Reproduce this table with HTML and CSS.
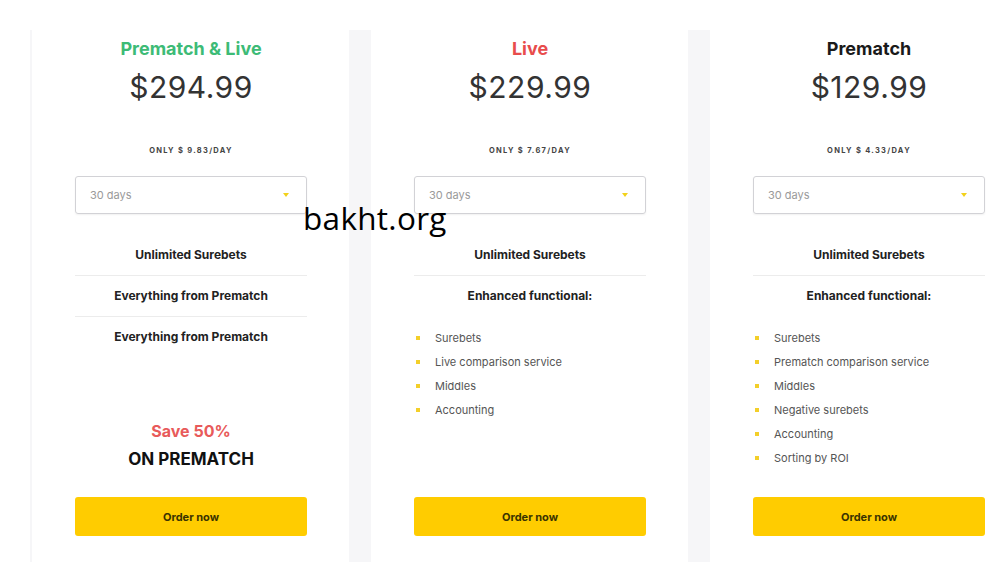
FILE: index.html
```html
<!DOCTYPE html>
<html lang="en">
<head>
<meta charset="utf-8">
<title>Pricing</title>
<link rel="stylesheet" href="styles.css">
</head>
<body>
<div class="page">
  <div class="plans">
    <section class="card">
      <h2 class="title title-green">Prematch &amp; Live</h2>
      <div class="price">$294.99</div>
      <div class="per-day">ONLY $ 9.83/DAY</div>
      <div class="select"><span>30 days</span><i class="caret"></i></div>
      <ul class="features">
        <li>Unlimited Surebets</li>
        <li>Everything from Prematch</li>
        <li>Everything from Prematch</li>
      </ul>
      <div class="foot">
        <div class="promo">
          <div class="promo-save">Save 50%</div>
          <div class="promo-on">ON PREMATCH</div>
        </div>
        <button class="order">Order now</button>
      </div>
    </section>
    <section class="card">
      <h2 class="title title-red">Live</h2>
      <div class="price">$229.99</div>
      <div class="per-day">ONLY $ 7.67/DAY</div>
      <div class="select"><span>30 days</span><i class="caret"></i></div>
      <ul class="features">
        <li>Unlimited Surebets</li>
        <li>Enhanced functional:</li>
      </ul>
      <ul class="bullets">
        <li>Surebets</li>
        <li>Live comparison service</li>
        <li>Middles</li>
        <li>Accounting</li>
      </ul>
      <div class="foot">
        <button class="order">Order now</button>
      </div>
    </section>
    <section class="card">
      <h2 class="title">Prematch</h2>
      <div class="price">$129.99</div>
      <div class="per-day">ONLY $ 4.33/DAY</div>
      <div class="select"><span>30 days</span><i class="caret"></i></div>
      <ul class="features">
        <li>Unlimited Surebets</li>
        <li>Enhanced functional:</li>
      </ul>
      <ul class="bullets">
        <li>Surebets</li>
        <li>Prematch comparison service</li>
        <li>Middles</li>
        <li>Negative surebets</li>
        <li>Accounting</li>
        <li>Sorting by ROI</li>
      </ul>
      <div class="foot">
        <button class="order">Order now</button>
      </div>
    </section>
  </div>
  <div class="watermark">bakht.org</div>
</div>
</body>
</html>
```

FILE: styles.css
```css
* { box-sizing: border-box; }
html, body { margin: 0; padding: 0; background: #fff; }
body {
  width: 1002px;
  height: 562px;
  overflow: hidden;
  font-family: Inter, "Liberation Sans", Arial, sans-serif;
  color: #222;
}
.page { position: relative; height: 562px; overflow: hidden; }
.plans {
  margin: 30px 0 0 30px;
  padding-left: 2px;
  display: flex;
  gap: 22px;
  background: #f6f6f8;
  width: 1020px;
}
.card {
  flex: 0 0 317px;
  height: 532px;
  background: #fff;
  padding: 7px 42px 26px 43px;
  display: flex;
  flex-direction: column;
  align-items: stretch;
  text-align: center;
}
.title {
  margin: 0;
  font-size: 18px;
  line-height: 24px;
  font-weight: 700;
  color: #1a1a1a;
}
.title-green { color: #3dbb76; }
.title-red { color: #e84c4c; }
.price {
  margin-top: 8px;
  font-size: 30px;
  line-height: 36px;
  font-weight: 400;
  color: #333;
  letter-spacing: 0.5px;
}
.per-day {
  margin-top: 40px;
  font-size: 7.5px;
  line-height: 12px;
  font-weight: 700;
  letter-spacing: 1.3px;
  color: #444;
}
.select {
  margin-top: 19px;
  height: 38px;
  border: 1px solid #d2d2d6;
  border-radius: 3px;
  box-shadow: 0 1px 2px rgba(0,0,0,0.06);
  display: flex;
  align-items: center;
  justify-content: space-between;
  padding: 0 17px 0 14px;
  font-size: 11px;
  color: #9a9a9a;
}
.caret {
  width: 0;
  height: 0;
  border-left: 3.5px solid transparent;
  border-right: 3.5px solid transparent;
  border-top: 4px solid #f2d11a;
}
.features {
  list-style: none;
  margin: 21px 0 0;
  padding: 0;
}
.features li {
  padding: 13px 0 13px;
  font-size: 12px;
  line-height: 14px;
  font-weight: 700;
  color: #222;
}
.features li + li { border-top: 1px solid #ececec; }
.bullets {
  list-style: none;
  margin: 10px 0 0;
  padding: 0;
  text-align: left;
}
.bullets li {
  position: relative;
  padding-left: 21px;
  font-size: 11px;
  line-height: 24px;
  color: #555;
}
.bullets li::before {
  content: "";
  position: absolute;
  left: 2px;
  top: 10px;
  width: 4px;
  height: 4px;
  background: #f3cf2a;
}
.foot {
  margin-top: auto;
  display: flex;
  flex-direction: column;
}
.promo-save {
  font-size: 16px;
  line-height: 20px;
  font-weight: 700;
  color: #e85a5a;
}
.promo-on {
  margin-top: 8px;
  font-size: 17px;
  line-height: 20px;
  font-weight: 700;
  color: #111;
}
.promo + .order { margin-top: 28px; }
.order {
  height: 39px;
  border: 0;
  border-radius: 3px;
  background: #ffcc00;
  font-family: inherit;
  font-size: 11px;
  font-weight: 700;
  color: #3a3300;
  cursor: pointer;
}
.watermark {
  position: absolute;
  left: 303px;
  top: 203px;
  font-family: "Open Sans", "Noto Sans", sans-serif;
  font-size: 31.5px;
  line-height: 30px;
  color: #000;
  letter-spacing: 0.3px;
}
```
